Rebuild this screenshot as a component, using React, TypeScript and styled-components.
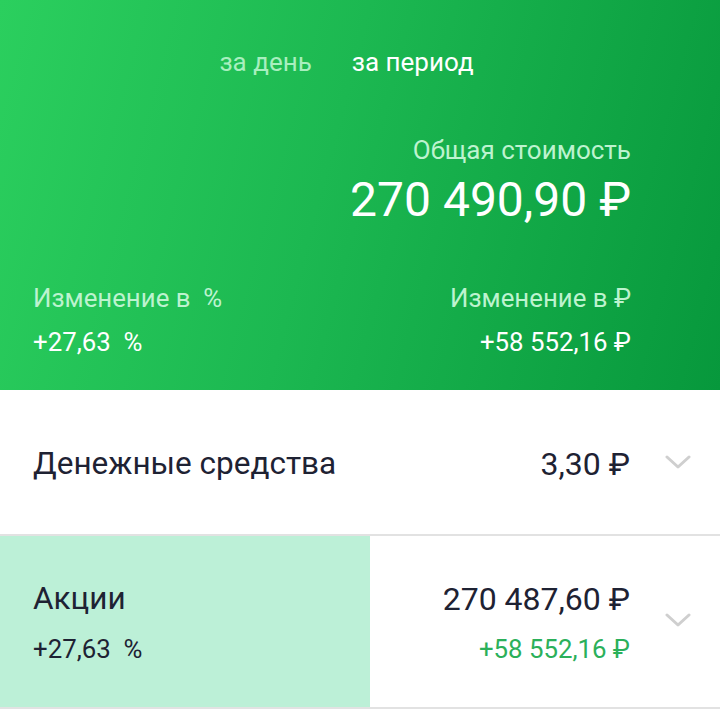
import React from "react";
import styled, { createGlobalStyle } from "styled-components";

const Global = createGlobalStyle`
  html, body { margin: 0; padding: 0; background: #ffffff; }
  body { font-family: Roboto, "Noto Sans", "Liberation Sans", sans-serif; }
`;

const Page = styled.div`
  width: 720px;
  height: 710px;
  overflow: hidden;
  background: #ffffff;
`;

const Header = styled.section`
  height: 390px;
  box-sizing: border-box;
  background: linear-gradient(105deg, #2bcf5e 0%, #1cb851 45%, #07983c 100%);
  padding: 45px 89px 0 33px;
  display: flex;
  flex-direction: column;
`;

const Tabs = styled.div`
  display: flex;
  justify-content: center;
  gap: 40px;
  padding-left: 29px;
`;

const Tab = styled.span<{ $active?: boolean }>`
  font-size: 26px;
  line-height: 34px;
  font-weight: 400;
  color: ${(p) => (p.$active ? "#ffffff" : "#a8efbf")};
`;

const Total = styled.div`
  margin-top: 54px;
  display: flex;
  flex-direction: column;
  align-items: flex-end;
`;

const Label = styled.span`
  font-size: 26px;
  line-height: 34px;
  color: #bdf3cf;
`;

const BigValue = styled.span`
  margin-top: 5px;
  font-size: 48px;
  line-height: 56px;
  color: #ffffff;
`;

const Changes = styled.div`
  margin-top: 53px;
  display: flex;
  justify-content: space-between;
`;

const ChangeCol = styled.div<{ $right?: boolean }>`
  display: flex;
  flex-direction: column;
  align-items: ${(p) => (p.$right ? "flex-end" : "flex-start")};
  gap: 10px;
`;

const ChangeLabel = styled.span`
  font-size: 25.8px;
  line-height: 34px;
  color: #bdf3cf;
`;

const ChangeValue = styled.span`
  font-size: 25.8px;
  line-height: 34px;
  color: #ffffff;
`;

const Row = styled.div<{ $height: number }>`
  height: ${(p) => p.$height}px;
  display: grid;
  grid-template-columns: 370px 1fr 90px;
  border-bottom: 2px solid #e2e2e2;
  box-sizing: border-box;
`;

const NameCell = styled.div<{ $highlight?: boolean }>`
  background: ${(p) => (p.$highlight ? "#bcf0d7" : "transparent")};
  padding-left: 33px;
  padding-top: 3px;
  display: flex;
  flex-direction: column;
  justify-content: center;
  gap: 14px;
`;

const ValueCell = styled.div`
  display: flex;
  flex-direction: column;
  align-items: flex-end;
  justify-content: center;
  padding-top: 3px;
  gap: 14px;
`;

const Name = styled.span`
  font-size: 31.5px;
  line-height: 38px;
  color: #1e2233;
`;

const Amount = styled.span`
  font-size: 32px;
  line-height: 38px;
  color: #1e2233;
`;

const SubPercent = styled.span`
  font-size: 25.8px;
  line-height: 34px;
  color: #1e2233;
`;

const SubGain = styled.span`
  font-size: 25.8px;
  line-height: 34px;
  color: #2bb05a;
`;

const ChevronCell = styled.div<{ $lift?: number }>`
  display: flex;
  align-items: center;
  justify-content: flex-start;
  padding-left: 35px;
  padding-bottom: ${(p) => p.$lift ?? 0}px;
`;

const Chevron = () => (
  <svg width="26" height="16" viewBox="0 0 26 16" fill="none">
    <path d="M2 3 L13 13 L24 3" stroke="#cfcfcf" strokeWidth="3" strokeLinecap="round" strokeLinejoin="round" />
  </svg>
);

export default function App() {
  return (
    <Page>
      <Global />
      <Header>
        <Tabs>
          <Tab>за день</Tab>
          <Tab $active>за период</Tab>
        </Tabs>
        <Total>
          <Label>Общая стоимость</Label>
          <BigValue>270 490,90 ₽</BigValue>
        </Total>
        <Changes>
          <ChangeCol>
            <ChangeLabel>Изменение в&nbsp;&nbsp;%</ChangeLabel>
            <ChangeValue>+27,63&nbsp;&nbsp;%</ChangeValue>
          </ChangeCol>
          <ChangeCol $right>
            <ChangeLabel>Изменение в ₽</ChangeLabel>
            <ChangeValue>+58 552,16 ₽</ChangeValue>
          </ChangeCol>
        </Changes>
      </Header>
      <Row $height={146}>
        <NameCell>
          <Name>Денежные средства</Name>
        </NameCell>
        <ValueCell>
          <Amount>3,30 ₽</Amount>
        </ValueCell>
        <ChevronCell>
          <Chevron />
        </ChevronCell>
      </Row>
      <Row $height={173}>
        <NameCell $highlight>
          <Name>Акции</Name>
          <SubPercent>+27,63&nbsp;&nbsp;%</SubPercent>
        </NameCell>
        <ValueCell>
          <Amount>270 487,60 ₽</Amount>
          <SubGain>+58 552,16 ₽</SubGain>
        </ValueCell>
        <ChevronCell $lift={4}>
          <Chevron />
        </ChevronCell>
      </Row>
    </Page>
  );
}
